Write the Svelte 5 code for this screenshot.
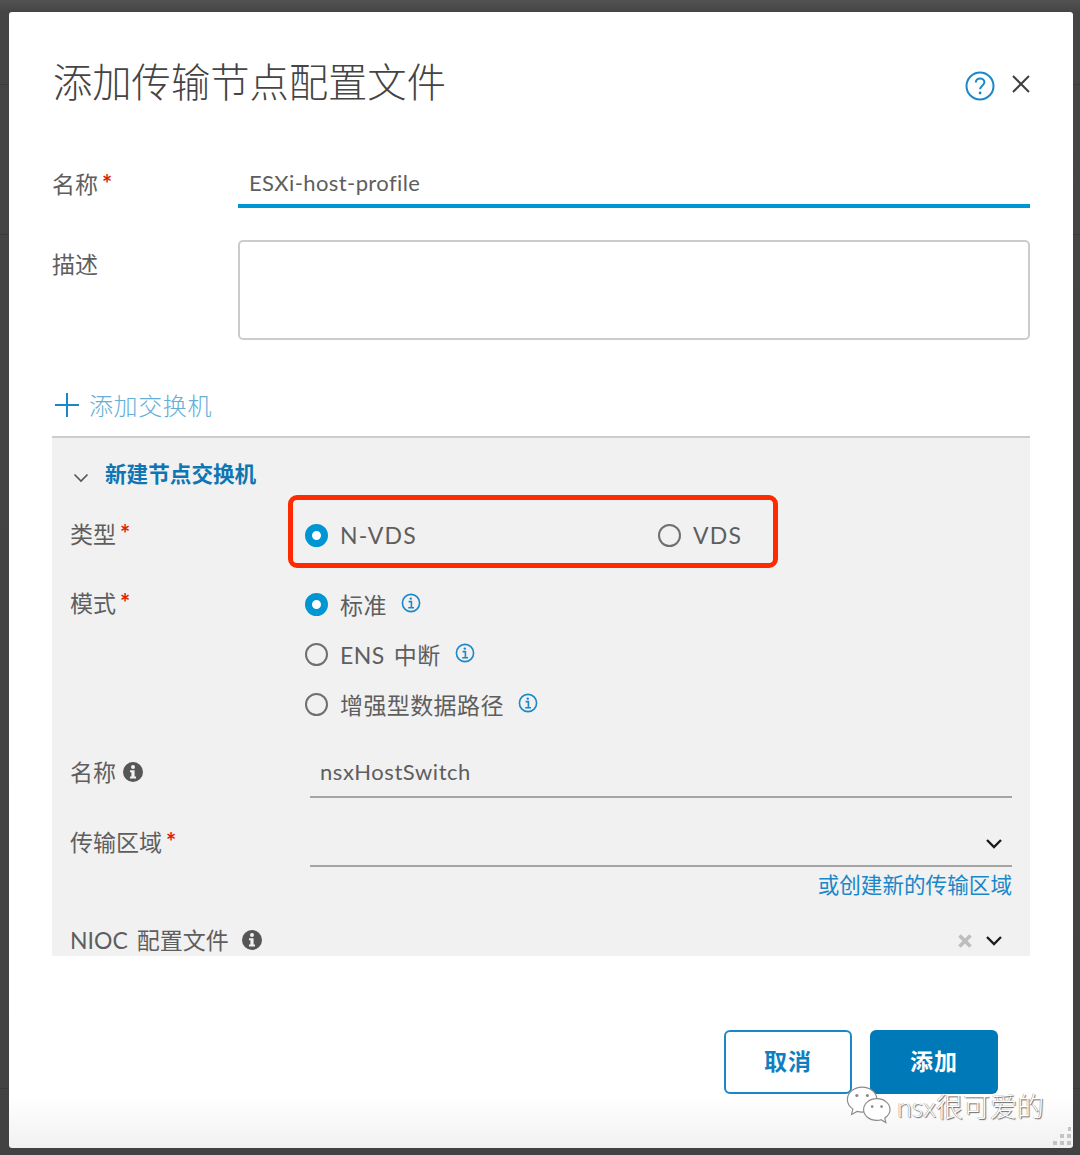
<script>
	const modes = [
		{ label: '标准', checked: true },
		{ label: 'ENS 中断', checked: false },
		{ label: '增强型数据路径', checked: false }
	];
</script>

{#snippet radio(checked)}
	<span class="radio" class:checked></span>
{/snippet}

{#snippet infoOutline()}
	<svg class="info-outline" viewBox="0 0 20 20" width="20" height="20" fill="none" stroke="#1a87c8">
		<circle cx="10" cy="10" r="8.6" stroke-width="1.6" />
		<path d="M7.6 8.6h2.8v6M7.2 14.8h5.8" stroke-width="1.6" />
		<circle cx="9.8" cy="5.6" r="1.2" fill="#1a87c8" stroke="none" />
	</svg>
{/snippet}

{#snippet infoSolid()}
	<svg class="info-solid" viewBox="0 0 20 20" width="20" height="20">
		<circle cx="10" cy="10" r="10" fill="#565656" />
		<circle cx="10" cy="5" r="2" fill="#f1f1f1" />
		<path d="M7 8.2h4.6v6.2h1.4v2H7v-2h1.4v-4.2H7z" fill="#f1f1f1" />
	</svg>
{/snippet}

{#snippet chevron()}
	<svg class="chevron" viewBox="0 0 18 12" width="18" height="12" fill="none" stroke="#1c1c1c" stroke-width="2.4">
		<path d="M2 2l7 7 7-7" />
	</svg>
{/snippet}

<div class="page">
	<div class="modal">
		<header class="modal-header">
			<h1 class="modal-title">添加传输节点配置文件</h1>
			<div class="header-icons">
				<svg viewBox="0 0 30 30" width="30" height="30" fill="none" stroke="#1a87c8" stroke-width="2">
					<circle cx="15" cy="15" r="13.5" />
					<path d="M10.8 11.6c0-2.6 2-4.2 4.3-4.2s4.3 1.5 4.3 3.9c0 3.4-4.3 3.6-4.3 7" />
					<circle cx="15.1" cy="22" r="1.4" fill="#1a87c8" stroke="none" />
				</svg>
				<svg viewBox="0 0 20 20" width="20" height="20" fill="none" stroke="#3f3f3f" stroke-width="2">
					<path d="M2 2l16 16M18 2L2 18" />
				</svg>
			</div>
		</header>

		<div class="form-row name-row">
			<div class="label">名称<span class="req">*</span></div>
			<div class="name-input">ESXi-host-profile</div>
		</div>

		<div class="form-row desc-row">
			<div class="label">描述</div>
			<div class="textarea"></div>
		</div>

		<div class="add-switch">
			<svg viewBox="0 0 24 24" width="24" height="24" stroke="#1a87c8" stroke-width="2">
				<path d="M0 12h24M12 0v24" />
			</svg>
			<span>添加交换机</span>
		</div>

		<section class="panel">
			<div class="panel-head">
				<svg viewBox="0 0 16 10" width="16" height="10" fill="none" stroke="#555" stroke-width="1.6">
					<path d="M1.5 1.5L8 8l6.5-6.5" />
				</svg>
				<span>新建节点交换机</span>
			</div>

			<div class="panel-row type-row">
				<div class="label">类型<span class="req">*</span></div>
				<div class="type-options">
					<label class="option">{@render radio(true)}<span>N-VDS</span></label>
					<label class="option">{@render radio(false)}<span>VDS</span></label>
				</div>
				<div class="highlight"></div>
			</div>

			<div class="panel-row mode-row">
				<div class="label">模式<span class="req">*</span></div>
				<div class="mode-options">
					{#each modes as m}
						<label class="option">
							{@render radio(m.checked)}<span>{m.label}</span>{@render infoOutline()}
						</label>
					{/each}
				</div>
			</div>

			<div class="panel-row field-row switch-name">
				<div class="label">名称{@render infoSolid()}</div>
				<div class="line-input">nsxHostSwitch</div>
			</div>

			<div class="panel-row field-row zone-row">
				<div class="label">传输区域<span class="req">*</span></div>
				<div class="line-input select">{@render chevron()}</div>
			</div>
			<a class="create-link" href="#zone">或创建新的传输区域</a>

			<div class="panel-row nioc-row">
				<div class="label">NIOC 配置文件{@render infoSolid()}</div>
				<div class="nioc-controls">
					<svg viewBox="0 0 14 14" width="14" height="14" stroke="#bdbdbd" stroke-width="3.6">
						<path d="M1.5 1.5l11 11M12.5 1.5l-11 11" />
					</svg>
					{@render chevron()}
				</div>
			</div>
		</section>

		<footer class="modal-footer">
			<button class="btn btn-outline">取消</button>
			<button class="btn btn-primary">添加</button>
		</footer>

		<div class="watermark">
			<svg viewBox="0 0 46 38" width="49" height="40" fill="#fff" stroke="#8a8a8a" stroke-width="1.1">
				<path d="M16 2C8 2 2 7.300 2 13.800c0 3.700 2 6.900 5.200 9.100L6 28l5.200-2.900c1.500.4 3 .6 4.800.6 8 0 14-5.400 14-11.900S24 2 16 2z" />
				<path d="M30 13c-7 0-12.600 4.600-12.600 10.300S23 33.600 30 33.600c1.400 0 2.800-.2 4-.6l4.500 2.600-1-4.300c3-1.900 5-4.800 5-8C42.500 17.600 37 13 30 13z" />
				<circle cx="11" cy="10" r="1.500" fill="#8a8a8a" stroke="none" />
				<circle cx="21" cy="10" r="1.500" fill="#8a8a8a" stroke="none" />
				<circle cx="25.500" cy="20.500" r="1.300" fill="#8a8a8a" stroke="none" />
				<circle cx="34.500" cy="20.500" r="1.300" fill="#8a8a8a" stroke="none" />
			</svg>
			<span>nsx很可爱的</span>
		</div>

		<div class="resize-grip"></div>
	</div>
</div>

<style>
	:global(body) {
		margin: 0;
	}
	.page {
		box-sizing: border-box;
		width: 1080px;
		height: 1155px;
		padding: 12px 7px 7px 9px;
		background:
			linear-gradient(#3a3a3a, #3a3a3a) 0 84px / 100% 1px no-repeat,
			linear-gradient(#3a3a3a, #3a3a3a) 0 234px / 100% 1px no-repeat,
			linear-gradient(#3a3a3a, #3a3a3a) 0 1088px / 100% 1px no-repeat,
			linear-gradient(#525252, #454545 12px, #424242);
		font-family: 'Lato', 'Noto Sans CJK SC', sans-serif;
		color: #5e5e5e;
	}
	.modal {
		position: relative;
		box-sizing: border-box;
		height: 1136px;
		padding: 0 43px;
		border-radius: 3px;
		background: linear-gradient(#fff 1085px, #f1f1f1);
		display: flex;
		flex-direction: column;
	}
	.modal-header {
		display: flex;
		justify-content: space-between;
		height: 140px;
	}
	.modal-title {
		margin: 42px 0 0 1px;
		font-size: 39.300px;
		line-height: 52px;
		font-weight: 200;
		color: #444;
		font-family: 'Noto Sans CJK SC', sans-serif;
	}
	.header-icons {
		display: flex;
		gap: 16px;
		padding-top: 59px;
		align-items: flex-start;
		margin-left: auto;
		margin-right: -1px;
	}
	.header-icons svg:last-child {
		margin-top: 3px;
	}
	.label {
		display: flex;
		align-items: center;
		font-size: 23px;
		line-height: 32px;
		word-spacing: 3px;
		white-space: nowrap;
	}
	.req {
		color: #e12200;
		font-size: 24px;
		font-weight: 700;
		line-height: 20px;
		margin-left: 4px;
	}
	.form-row {
		display: grid;
		grid-template-columns: 186px 1fr;
	}
	.name-row {
		height: 56px;
		align-items: start;
	}
	.name-row .label {
		margin-top: 16px;
	}
	.name-input {
		box-sizing: border-box;
		height: 56px;
		padding: 15px 0 0 11px;
		font-size: 22px;
		line-height: 32px;
		letter-spacing: 0.4px;
		border-bottom: 4px solid #0095d3;
	}
	.desc-row {
		margin-top: 32px;
		height: 100px;
	}
	.desc-row .label {
		margin-top: 8px;
		align-self: start;
	}
	.textarea {
		border: 2px solid #ccc;
		border-radius: 5px;
		background: #fff;
	}
	.add-switch {
		display: flex;
		align-items: center;
		gap: 10px;
		margin-left: 3px;
		padding-top: 33px;
		box-sizing: border-box;
		height: 96px;
		font-size: 24px;
		letter-spacing: 0.6px;
		color: #65aed8;
		font-weight: 300;
	}
	.panel {
		position: relative;
		box-sizing: border-box;
		height: 520px;
		padding: 0 18px;
		border-top: 2px solid #ccc;
		background: #f1f1f1;
		overflow: hidden;
	}
	.panel-head {
		display: flex;
		align-items: center;
		gap: 16px;
		height: 34px;
		margin-top: 17px;
		margin-left: 3px;
		font-size: 21.6px;
		font-weight: 700;
		color: #0f76b3;
	}
	.panel-head svg {
		margin-top: 11px;
	}
	.panel-row {
		position: relative;
		display: grid;
		grid-template-columns: 235px 1fr;
	}
	.option {
		display: flex;
		align-items: center;
		gap: 12px;
		font-size: 23px;
		letter-spacing: 0.4px;
		word-spacing: 3px;
		height: 32px;
	}
	.radio {
		box-sizing: border-box;
		flex: none;
		width: 23px;
		height: 23px;
		border-radius: 50%;
		border: 2px solid #6f6f6f;
	}
	.radio.checked {
		border: 7px solid #0095d3;
		background: #fff;
	}
	.type-row {
		margin-top: 30px;
		height: 32px;
	}
	.type-row .label {
		margin-top: -2px;
	}
	.type-options {
		display: flex;
	}
	.type-options .option {
		letter-spacing: 1.2px;
	}
	.type-options .option:first-child {
		width: 353px;
	}
	.highlight {
		position: absolute;
		box-sizing: border-box;
		left: 218px;
		top: -24px;
		width: 490px;
		height: 73px;
		border: 5px solid #ff2a00;
		border-radius: 9px;
	}
	.mode-row {
		margin-top: 37px;
		align-items: start;
	}
	.mode-row .label {
		margin-top: -1px;
	}
	.mode-options {
		display: flex;
		flex-direction: column;
		gap: 18px;
	}
	.info-outline {
		margin: -3px 0 0 2px;
	}
	.label .info-solid {
		margin-left: 7px;
	}
	.field-row {
		align-items: start;
	}
	.switch-name {
		margin-top: 36px;
	}
	.switch-name .line-input {
		height: 42px;
	}
	.line-input {
		box-sizing: border-box;
		height: 41px;
		margin-left: 5px;
		padding: 0 0 0 10px;
		font-size: 22px;
		line-height: 32px;
		letter-spacing: 0.55px;
		border-bottom: 2px solid #a5a5a5;
	}
	.zone-row {
		margin-top: 28px;
	}
	.select {
		display: flex;
		justify-content: flex-end;
		align-items: center;
		padding: 0 9px 4px 0;
	}
	.create-link {
		display: block;
		height: 32px;
		line-height: 32px;
		margin-top: 2px;
		text-align: right;
		font-size: 21.600px;
		color: #1a87c8;
		text-decoration: none;
	}
	.nioc-row {
		margin-top: 23px;
		grid-template-columns: 1fr auto;
	}
	.nioc-controls {
		display: flex;
		align-items: center;
		gap: 13px;
		margin-top: 1px;
		padding-right: 9px;
	}
	.nioc-row .info-solid {
		margin-left: 13px;
	}
	.modal-footer {
		display: flex;
		justify-content: flex-end;
		gap: 18px;
		margin-top: 74px;
		padding-right: 32px;
	}
	.btn {
		box-sizing: border-box;
		width: 128px;
		height: 64px;
		padding: 0 0 5px;
		border-radius: 6px;
		font-family: inherit;
		font-size: 23px;
		font-weight: 700;
		letter-spacing: 1px;
	}
	.btn-outline {
		background: #fff;
		border: 2px solid #1a87c8;
		color: #0f7fc0;
	}
	.btn-primary {
		background: #0079b8;
		border: 0;
		color: #fff;
	}
	.watermark {
		position: absolute;
		left: 836px;
		top: 1073px;
		display: flex;
		align-items: center;
		gap: 3px;
		font-size: 27px;
		font-weight: 300;
		color: #fff;
		text-shadow: 1px 1px 1px #666, -0.5px -0.5px 0 #999;
	}
	.resize-grip {
		position: absolute;
		right: 2px;
		bottom: 2px;
		width: 20px;
		height: 20px;
		background:
			radial-gradient(circle 2.300px, #c4c4c4 98%, transparent) 16px 0 / 6px 6px no-repeat,
			radial-gradient(circle 2.300px, #c4c4c4 98%, transparent) 8px 7px / 6px 6px no-repeat,
			radial-gradient(circle 2.300px, #c4c4c4 98%, transparent) 15px 7px / 6px 6px no-repeat,
			radial-gradient(circle 2.300px, #c4c4c4 98%, transparent) 1px 14px / 6px 6px no-repeat,
			radial-gradient(circle 2.300px, #c4c4c4 98%, transparent) 8px 14px / 6px 6px no-repeat,
			radial-gradient(circle 2.300px, #c4c4c4 98%, transparent) 15px 14px / 6px 6px no-repeat;
	}
</style>
